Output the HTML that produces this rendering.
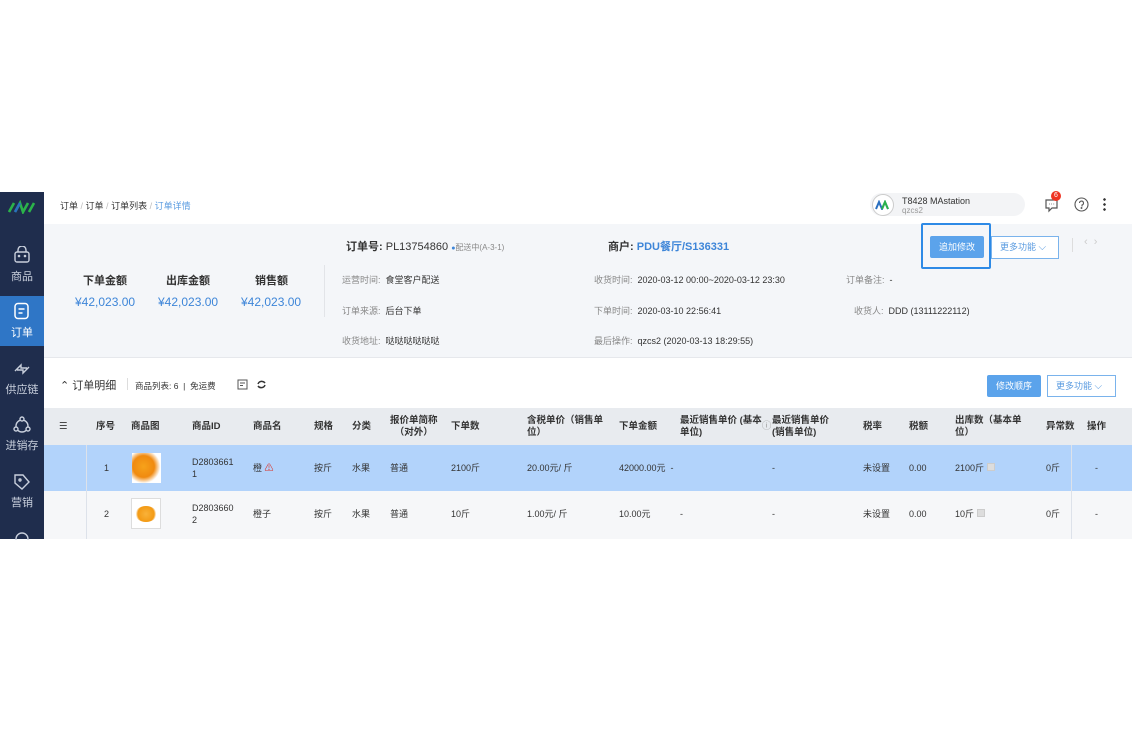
<!DOCTYPE html><html><head><meta charset="utf-8"><style>
*{margin:0;padding:0;box-sizing:border-box}
body{width:1132px;height:732px;background:#fff;position:relative;overflow:hidden;font-family:"Liberation Sans","Noto Sans CJK SC",sans-serif;color:#333;font-size:9px}
.a{position:absolute;white-space:nowrap}
.sb{position:absolute;left:0;top:192px;width:44px;height:347px;background:#1f2d4d}
.ni{position:absolute;left:0;width:44px;text-align:center;color:#c8cfdc;font-size:11px}
.lb{color:#888}
.th{position:absolute;top:408px;height:37px;font-weight:bold;font-size:9.5px;color:#333;line-height:12px;display:flex;align-items:center}
.td{position:absolute;font-size:9px;color:#333;line-height:12px}
</style></head><body>
<div class="sb"></div>
<div class="a" style="left:0;top:296px;width:44px;height:50px;background:#2f76c6"></div>
<div class="a" style="left:40px;top:316px;width:0;height:0;border:4px solid transparent;border-right-color:#fff"></div>
<svg class="a" style="left:8px;top:200px" width="28" height="14"><path d="M1 12 L6 3 M7 12 L12 3 L15 12 L20 3 M21 12 L26 3" stroke="#2bb34a" stroke-width="2.6" fill="none"/><path d="M7 12 L12 3" stroke="#2a6fc0" stroke-width="2.6"/></svg>
<svg class="a" style="left:13px;top:246px" width="18" height="18" fill="none" stroke="#c8cfdc" stroke-width="1.4"><rect x="2" y="6" width="14" height="10" rx="2"/><path d="M5 6 V4 a4 4 0 0 1 8 0 V6"/><circle cx="6" cy="10" r=".6"/><circle cx="12" cy="10" r=".6"/></svg>
<div class="ni" style="top:268px">商品</div>
<svg class="a" style="left:13px;top:302px" width="18" height="18" fill="none" stroke="#fff" stroke-width="1.5"><rect x="2" y="1.5" width="13" height="15" rx="3"/><path d="M5.5 7h6M5.5 11h4"/></svg>
<div class="ni" style="top:324px;color:#fff">订单</div>
<svg class="a" style="left:12px;top:360px" width="20" height="18" fill="none" stroke="#c8cfdc" stroke-width="1.4"><path d="M3 11 L9 5 L9 8 L15 8 M17 7 L11 13 L11 10 L5 10"/></svg>
<div class="ni" style="top:381px">供应链</div>
<svg class="a" style="left:12px;top:415px" width="20" height="20" fill="none" stroke="#c8cfdc" stroke-width="1.4"><circle cx="10" cy="11" r="6"/><circle cx="10" cy="4" r="2" fill="#1f2d4d"/><circle cx="4" cy="14" r="2" fill="#1f2d4d"/><circle cx="16" cy="14" r="2" fill="#1f2d4d"/></svg>
<div class="ni" style="top:437px">进销存</div>
<svg class="a" style="left:12px;top:472px" width="20" height="20" fill="none" stroke="#c8cfdc" stroke-width="1.4"><path d="M3 3h8l6 7-7 7-7-6z"/><circle cx="8" cy="8" r="1"/></svg>
<div class="ni" style="top:494px">营销</div>
<svg class="a" style="left:12px;top:528px" width="20" height="12" fill="none" stroke="#c8cfdc" stroke-width="1.4"><circle cx="10" cy="11" r="6"/></svg>

<div class="a" style="left:60px;top:199px;font-size:9px;color:#333">订单 <span style="color:#bbb">/</span> 订单 <span style="color:#bbb">/</span> 订单列表 <span style="color:#bbb">/</span> <span style="color:#5a9be0">订单详情</span></div>
<div class="a" style="left:870px;top:193px;width:155px;height:23px;border-radius:12px;background:#f3f4f6"></div>
<div class="a" style="left:872px;top:194px;width:22px;height:22px;border-radius:50%;border:1px solid #ccc;background:#fff"></div>
<svg class="a" style="left:875px;top:200px" width="16" height="10"><path d="M1 9 L4 2 L7 9 L10 2 L13 9" stroke="#2a6fc0" stroke-width="2" fill="none"/><path d="M7 9 L10 2 L13 9" stroke="#2bb34a" stroke-width="2" fill="none"/></svg>
<div class="a" style="left:902px;top:196px;font-size:9px;color:#333">T8428 MAstation</div>
<div class="a" style="left:902px;top:206px;font-size:8px;color:#999">qzcs2</div>
<svg class="a" style="left:1044px;top:197px" width="16" height="16" fill="none" stroke="#555" stroke-width="1.2"><path d="M2 3h11v8H8l-3 3v-3H2z"/><path d="M5 7h.5M7.3 7h.5M9.6 7h.5"/></svg>
<div class="a" style="left:1051px;top:191px;width:10px;height:10px;border-radius:50%;background:#e32;color:#fff;font-size:7px;text-align:center;line-height:10px">6</div>
<svg class="a" style="left:1074px;top:197px" width="15" height="15" fill="none" stroke="#555" stroke-width="1.1"><circle cx="7.5" cy="7.5" r="6.5"/><path d="M5.5 6a2 2 0 1 1 2.5 2v1.5"/><circle cx="7.5" cy="11" r=".4"/></svg>
<div class="a" style="left:1103px;top:197px;width:3px;height:14px;background:radial-gradient(circle,#333 1.2px,transparent 1.4px) 0 0/3px 5px"></div>

<div class="a" style="left:44px;top:224px;width:1088px;height:134px;background:#f4f6f9;border-bottom:1px solid #e6e8ec"></div>
<div class="a" style="left:83px;top:272px;font-size:11px;font-weight:bold">下单金额</div>
<div class="a" style="left:166px;top:272px;font-size:11px;font-weight:bold">出库金额</div>
<div class="a" style="left:255px;top:272px;font-size:11px;font-weight:bold">销售额</div>
<div class="a" style="left:75px;top:295px;font-size:12px;color:#3d85d8">¥42,023.00</div>
<div class="a" style="left:158px;top:295px;font-size:12px;color:#3d85d8">¥42,023.00</div>
<div class="a" style="left:241px;top:295px;font-size:12px;color:#3d85d8">¥42,023.00</div>
<div class="a" style="left:324px;top:265px;width:1px;height:52px;background:#e2e4e8"></div>
<div class="a" style="left:346px;top:238px;font-size:11px"><b>订单号:</b> PL13754860 <span style="color:#3d85d8;font-size:7px">●</span><span style="font-size:8px;color:#888">配送中(A-3-1)</span></div>
<div class="a" style="left:608px;top:238px;font-size:11px"><b>商户:</b> <b style="color:#3d85d8">PDU餐厅/S136331</b></div>
<div class="a" style="left:342px;top:273px"><span class="lb">运营时间:</span>&nbsp; 食堂客户配送</div>
<div class="a" style="left:342px;top:304px"><span class="lb">订单来源:</span>&nbsp; 后台下单</div>
<div class="a" style="left:342px;top:334px"><span class="lb">收货地址:</span>&nbsp; 哒哒哒哒哒哒</div>
<div class="a" style="left:594px;top:273px"><span class="lb">收货时间:</span>&nbsp; 2020-03-12 00:00~2020-03-12 23:30</div>
<div class="a" style="left:594px;top:304px"><span class="lb">下单时间:</span>&nbsp; 2020-03-10 22:56:41</div>
<div class="a" style="left:594px;top:334px"><span class="lb">最后操作:</span>&nbsp; qzcs2 (2020-03-13 18:29:55)</div>
<div class="a" style="left:846px;top:273px"><span class="lb">订单备注:</span>&nbsp; -</div>
<div class="a" style="left:854px;top:304px"><span class="lb">收货人:</span>&nbsp; DDD (13111222112)</div>
<div class="a" style="left:921px;top:223px;width:70px;height:46px;border:2px solid #2d8ae6;border-radius:2px"></div>
<div class="a" style="left:930px;top:236px;width:54px;height:22px;background:#5ba3eb;color:#fff;text-align:center;line-height:22px;font-size:9px;border-radius:2px">追加修改</div>
<div class="a" style="left:991px;top:236px;width:68px;height:23px;border:1px solid #7ab3ec;background:#fff;color:#5a9be0;line-height:21px;padding-left:8px;font-size:9px">更多功能 <span style="font-size:10px">⌵</span></div>
<div class="a" style="left:1072px;top:238px;width:1px;height:14px;background:#ddd"></div>
<div class="a" style="left:1084px;top:236px;color:#ccc;font-size:11px">‹ &nbsp;›</div>

<div class="a" style="left:60px;top:377px;font-size:11px;color:#333">⌃ 订单明细</div>
<div class="a" style="left:127px;top:378px;width:1px;height:12px;background:#ddd"></div>
<div class="a" style="left:135px;top:380px;font-size:8.5px">商品列表: 6 &nbsp;| &nbsp;免运费</div>
<svg class="a" style="left:237px;top:379px" width="11" height="11" fill="none" stroke="#555"><rect x="1" y="1" width="9" height="9"/><path d="M3 4h5M3 6.5h3"/></svg>
<svg class="a" style="left:256px;top:379px" width="11" height="11" fill="none" stroke="#333" stroke-width="1.5"><path d="M9 4a4 4 0 0 0-7 1M2 7a4 4 0 0 0 7-1"/></svg>
<div class="a" style="left:987px;top:375px;width:54px;height:22px;background:#5ba3eb;color:#fff;text-align:center;line-height:22px;font-size:9px;border-radius:2px">修改顺序</div>
<div class="a" style="left:1047px;top:375px;width:69px;height:22px;border:1px solid #7ab3ec;color:#5a9be0;line-height:20px;padding-left:8px;font-size:9px">更多功能 <span style="font-size:10px">⌵</span></div>

<div class="a" style="left:44px;top:408px;width:1088px;height:37px;background:#e8ebef"></div>
<div class="a" style="left:44px;top:445px;width:1088px;height:46px;background:#b2d3fb"></div>
<div class="a" style="left:44px;top:491px;width:1088px;height:48px;background:#f6f7f9"></div>
<div class="a" style="left:86px;top:445px;width:1px;height:94px;background:#dde2ea"></div>
<div class="a" style="left:1071px;top:445px;width:1px;height:94px;background:#dde2ea"></div>
<div class="th" style="left:59px;font-weight:normal">☰</div>
<div class="th" style="left:96px">序号</div><div class="th" style="left:131px">商品图</div>
<div class="th" style="left:192px">商品ID</div><div class="th" style="left:253px">商品名</div>
<div class="th" style="left:314px">规格</div><div class="th" style="left:352px">分类</div>
<div class="th" style="left:390px;text-align:center">报价单简称<br>（对外）</div>
<div class="th" style="left:451px">下单数</div>
<div class="th" style="left:527px">含税单价（销售单<br>位）</div>
<div class="th" style="left:619px">下单金额</div>
<div class="th" style="left:680px">最近销售单价 (基本<br>单位) <span style="font-weight:normal;color:#999">ⓘ</span></div>
<div class="th" style="left:772px">最近销售单价<br>(销售单位)</div>
<div class="th" style="left:863px">税率</div><div class="th" style="left:909px">税额</div>
<div class="th" style="left:955px">出库数（基本单<br>位）</div>
<div class="th" style="left:1046px">异常数</div><div class="th" style="left:1087px">操作</div>

<div class="a" style="left:132px;top:453px;width:29px;height:30px;background:radial-gradient(circle at 40% 45%,#f7a21a 0,#f08a10 45%,#fff 70%)"></div>
<div class="a" style="left:131px;top:498px;width:30px;height:31px;background:#fff;border:1px solid #ddd"></div>
<div class="a" style="left:135px;top:506px;width:22px;height:16px;border-radius:50%;background:radial-gradient(circle,#f9b23a 0,#f39a14 60%,#fff 75%)"></div>
<div class="td" style="left:104px;top:462px">1</div>
<div class="td" style="left:192px;top:456px">D2803661<br>1</div>
<div class="td" style="left:253px;top:462px">橙 <span style="color:#d9342b">⚠</span></div>
<div class="td" style="left:314px;top:462px">按斤</div><div class="td" style="left:352px;top:462px">水果</div>
<div class="td" style="left:390px;top:462px">普通</div><div class="td" style="left:451px;top:462px">2100斤</div>
<div class="td" style="left:527px;top:462px">20.00元/ 斤</div><div class="td" style="left:619px;top:462px">42000.00元 &nbsp;-</div>
<div class="td" style="left:772px;top:462px">-</div><div class="td" style="left:863px;top:462px">未设置</div>
<div class="td" style="left:909px;top:462px">0.00</div><div class="td" style="left:955px;top:462px">2100斤 <span style="display:inline-block;width:8px;height:8px;background:#ddd;border:1px solid #ccc"></span></div>
<div class="td" style="left:1046px;top:462px">0斤</div><div class="td" style="left:1095px;top:462px">-</div>
<div class="td" style="left:104px;top:508px">2</div>
<div class="td" style="left:192px;top:502px">D2803660<br>2</div>
<div class="td" style="left:253px;top:508px">橙子</div>
<div class="td" style="left:314px;top:508px">按斤</div><div class="td" style="left:352px;top:508px">水果</div>
<div class="td" style="left:390px;top:508px">普通</div><div class="td" style="left:451px;top:508px">10斤</div>
<div class="td" style="left:527px;top:508px">1.00元/ 斤</div><div class="td" style="left:619px;top:508px">10.00元</div>
<div class="td" style="left:680px;top:508px">-</div>
<div class="td" style="left:772px;top:508px">-</div><div class="td" style="left:863px;top:508px">未设置</div>
<div class="td" style="left:909px;top:508px">0.00</div><div class="td" style="left:955px;top:508px">10斤 <span style="display:inline-block;width:8px;height:8px;background:#ddd;border:1px solid #ccc"></span></div>
<div class="td" style="left:1046px;top:508px">0斤</div><div class="td" style="left:1095px;top:508px">-</div>
</body></html>
